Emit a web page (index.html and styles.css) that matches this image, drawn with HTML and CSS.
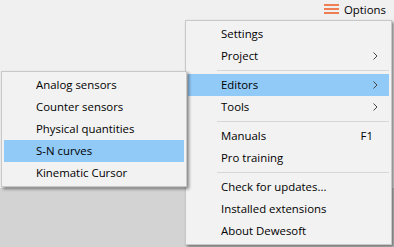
FILE: index.html
```html
<!DOCTYPE html>
<html>
<head>
    <title>Options</title>
    <link rel="stylesheet" href="styles.css">
</head>
<body>
    <div class="toolbar">
        <div class="options-btn">
            <svg class="burger" width="15" height="11" viewBox="0 0 15 11">
                <rect x="0" y="0" width="15" height="2" fill="#ee7f52"/>
                <rect x="0" y="4" width="15" height="2" fill="#ee7f52"/>
                <rect x="0" y="8" width="15" height="2" fill="#ee7f52"/>
            </svg>
            <span>Options</span>
        </div>
    </div>
    <div class="top-area"></div>
    <div class="bottom-area"></div>

    <div class="menu main-menu">
        <div class="item">Settings</div>
        <div class="item">Project<svg class="arrow" width="5" height="8" viewBox="0 0 5 8"><path d="M0.5 0.5 L4 4 L0.5 7.5" fill="none" stroke="#444" stroke-width="1"/></svg></div>
        <div class="sep"></div>
        <div class="item active">Editors<svg class="arrow" width="5" height="8" viewBox="0 0 5 8"><path d="M0.5 0.5 L4 4 L0.5 7.5" fill="none" stroke="#444" stroke-width="1"/></svg></div>
        <div class="item">Tools<svg class="arrow" width="5" height="8" viewBox="0 0 5 8"><path d="M0.5 0.5 L4 4 L0.5 7.5" fill="none" stroke="#444" stroke-width="1"/></svg></div>
        <div class="sep"></div>
        <div class="item">Manuals<span class="key">F1</span></div>
        <div class="item">Pro training</div>
        <div class="sep"></div>
        <div class="item">Check for updates...</div>
        <div class="item">Installed extensions</div>
        <div class="item">About Dewesoft</div>
    </div>

    <div class="menu sub-menu">
        <div class="item">Analog sensors</div>
        <div class="item">Counter sensors</div>
        <div class="item">Physical quantities</div>
        <div class="item active">S-N curves</div>
        <div class="item">Kinematic Cursor</div>
    </div>
</body>
</html>
```

FILE: styles.css
```css
body {
    margin: 0;
    height: 247px;
    display: flex;
    flex-direction: column;
    background-color: #f0f0f0;
    font-family: "Open Sans", "Noto Sans", sans-serif;
    font-size: 11.4px;
    color: #000;
    overflow: hidden;
}
.toolbar {
    height: 20px;
    display: flex;
    justify-content: flex-end;
    align-items: flex-start;
}
.options-btn {
    display: flex;
    align-items: center;
    gap: 5px;
    height: 18px;
    padding-right: 8px;
}
.burger {
    margin-top: 1px;
}
.top-area {
    height: 168px;
    background-color: #f0f0f0;
}
.bottom-area {
    flex: 1;
    background-color: #d3d3d3;
}
.menu {
    position: absolute;
    background-color: #f2f2f2;
    border: 1px solid #c8c8c8;
    padding: 2px;
    box-shadow: 2px 2px 3px rgba(0, 0, 0, 0.45);
}
.main-menu {
    left: 185px;
    top: 20px;
    width: 201px;
}
.sub-menu {
    left: 1px;
    top: 71px;
    width: 180px;
}
.item {
    height: 22px;
    line-height: 22px;
    display: flex;
    justify-content: space-between;
    align-items: center;
    padding-left: 33px;
    padding-right: 10px;
    white-space: nowrap;
}
.sub-menu .item {
    padding-left: 32px;
}
.item.active {
    background-color: #91c9f7;
}
.arrow {
    margin-right: 1px;
}
.key {
    padding-right: 6px;
}
.sep {
    height: 7px;
    display: flex;
    align-items: center;
    padding-left: 29px;
}
.sep::after {
    content: "";
    flex: 1;
    height: 1px;
    background-color: #d7d7d7;
}
```
